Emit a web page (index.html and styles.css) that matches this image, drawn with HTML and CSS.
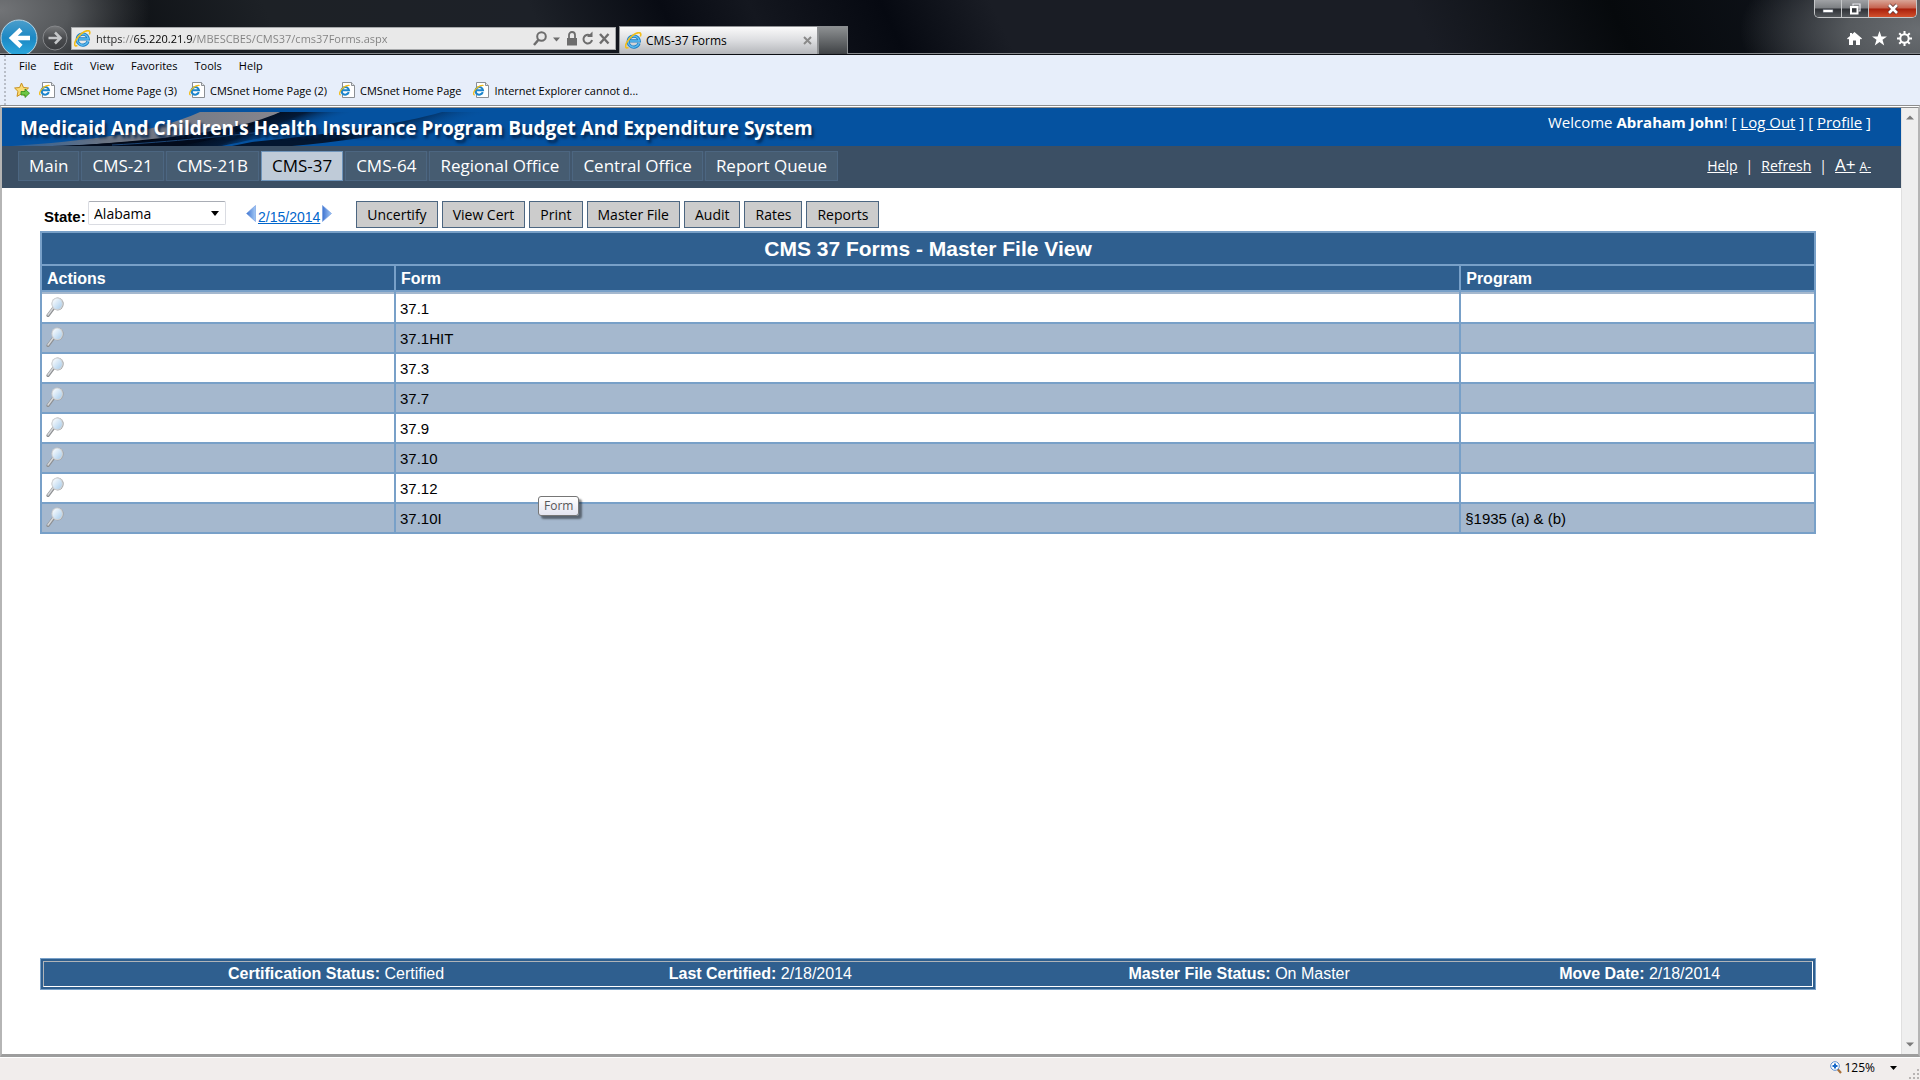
FILE: index.html
```html
<!DOCTYPE html>
<html lang="en">
<head>
    <meta charset="UTF-8">
    <meta name="viewport" content="width=device-width, initial-scale=1.0">
    <title>CMS-37 Forms</title>
    <link rel="stylesheet" href="styles.css">
</head>
<body>
    <svg width="0" height="0" class="defs" aria-hidden="true">
        <defs>
            <linearGradient id="glass" x1="0" y1="0" x2="1" y2="1">
                <stop offset="0" stop-color="#ffffff"/>
                <stop offset="1" stop-color="#a9cdec"/>
            </linearGradient>
            <linearGradient id="back" x1="0" y1="0" x2="0" y2="1">
                <stop offset="0" stop-color="#4b9ecb"/>
                <stop offset="0.5" stop-color="#1c88c4"/>
                <stop offset="1" stop-color="#2ba9de"/>
            </linearGradient>
            <linearGradient id="fwd" x1="0" y1="0" x2="0" y2="1">
                <stop offset="0" stop-color="#77797b"/>
                <stop offset="0.5" stop-color="#4a4c4f"/>
                <stop offset="1" stop-color="#3a3c3f"/>
            </linearGradient>
            <linearGradient id="tri" x1="0" y1="0" x2="1" y2="0">
                <stop offset="0" stop-color="#3f74d0"/>
                <stop offset="1" stop-color="#a3c8f5"/>
            </linearGradient>
            <linearGradient id="shade" gradientUnits="userSpaceOnUse" x1="240" y1="10" x2="252" y2="42">
                <stop offset="0" stop-color="#020814"/>
                <stop offset="0.5" stop-color="#031a38"/>
                <stop offset="1" stop-color="#0552a0" stop-opacity="0"/>
            </linearGradient>
            <linearGradient id="shade2" gradientUnits="userSpaceOnUse" x1="400" y1="8" x2="410" y2="34">
                <stop offset="0" stop-color="#031630"/>
                <stop offset="1" stop-color="#0552a0" stop-opacity="0"/>
            </linearGradient>
            <linearGradient id="silver" x1="0" y1="0" x2="1" y2="0">
                <stop offset="0" stop-color="#2b5f98"/>
                <stop offset="0.35" stop-color="#6a7382"/>
                <stop offset="1" stop-color="#85858d"/>
            </linearGradient>
            <symbol id="ie" viewBox="0 0 16 16">
                <path d="M13.2 10.6A5.2 5.2 0 1 1 13.4 8.4H4.5" fill="none" stroke="#1f7fc4" stroke-width="3"/>
                <path d="M13.2 10.6A5.2 5.2 0 1 1 13.4 8.4H4.5" fill="none" stroke="#5cbcf0" stroke-width="1.4"/>
                <path d="M3.2 14.6C.6 15.9-.3 13.6 1.7 9.8 4.2 5 9.7.6 13 .6c2.200 0 2.200 1.800 1.400 3.600" fill="none" stroke="#f3bd19" stroke-width="1.500"/>
            </symbol>
            <symbol id="page" viewBox="0 0 16 16">
                <path d="M3.500.5h9l3 3v12h-12z" fill="#fff" stroke="#8b8f94"/>
                <path d="M12.500.5v3h3" fill="#e4e6e8" stroke="#8b8f94"/>
                <path d="M9.800 10.200A3.800 3.800 0 1 1 10 8.200H3.500" fill="none" stroke="#1b84cc" stroke-width="2"/>
                <path d="M1.800 12.800C-.2 13 .3 9.600 3 6.800c2.500-2.700 6-4.100 7.600-3.200" fill="none" stroke="#f3bd19" stroke-width="1.200"/>
            </symbol>
            <symbol id="loupe" viewBox="0 0 18 20">
                <path d="M2 18.500L8 10.500" stroke="#8d8f92" stroke-width="3.200" stroke-linecap="round"/>
                <path d="M2 18L7.500 10.500" stroke="#d5d7d9" stroke-width="1.500" stroke-linecap="round"/>
                <ellipse cx="11.700" cy="7" rx="6" ry="6.500" fill="#9ea1a4"/>
                <ellipse cx="11.200" cy="6.700" rx="5.800" ry="6.300" fill="#d0d3d6"/>
                <ellipse cx="11.200" cy="6.700" rx="4.700" ry="5.200" fill="url(#glass)"/>
            </symbol>
        </defs>
    </svg>

    <div class="titlebar">
        <div class="nav-buttons">
            <button class="round back" aria-label="Back">
                <svg width="38" height="38" viewBox="0 0 38 38"><circle cx="19" cy="19" r="18" fill="url(#back)" stroke="#b7d3e2"/><path d="M30 19H12M21 10.500L12 19l9 8.500" fill="none" stroke="#fff" stroke-width="4.500"/></svg>
            </button>
            <button class="round" aria-label="Forward">
                <svg width="26" height="26" viewBox="0 0 26 26"><circle cx="13" cy="13" r="12" fill="url(#fwd)" stroke="#85878a"/><path d="M6.500 13H18M13 7.500l5.500 5.500-5.500 5.500" fill="none" stroke="#c5c7c9" stroke-width="2.500"/></svg>
            </button>
        </div>
        <div class="address">
            <svg width="17" height="17"><use href="#ie"/></svg>
            <input type="text" class="url" aria-label="Address" value="https://65.220.21.9/MBESCBES/CMS37/cms37Forms.aspx">
            <svg width="81" height="18" viewBox="0 0 81 18" fill="none" stroke="#6d6d6d">
                <circle cx="9.500" cy="6.500" r="4.300" stroke-width="2"/><path d="M6.500 9.800L2 15" stroke-width="2.500"/>
                <path d="M21 7.500h7l-3.500 4z" fill="#6d6d6d" stroke="none"/>
                <path d="M35 8h10v7.500H35z" fill="#6d6d6d" stroke="none"/><path d="M37 8V5a3 3 0 0 1 6 0v3" stroke-width="1.800"/>
                <path d="M58 5.500A4.300 4.300 0 1 0 60 10" stroke-width="2"/><path d="M55 7h5.500V1.500z" fill="#6d6d6d" stroke="none"/>
                <path d="M68 4l8.500 9.500M76.500 4L68 13.500" stroke-width="2.400"/>
            </svg>
        </div>
        <div class="tab">
            <svg width="17" height="17"><use href="#ie"/></svg>
            <span>CMS-37 Forms</span>
            <button class="tab-close" aria-label="Close tab"><svg width="9" height="9" viewBox="0 0 9 9"><path d="M1 1l7 7M8 1L1 8" stroke="#8a8a8a" stroke-width="2"/></svg></button>
        </div>
        <button class="new-tab" aria-label="New tab"></button>
        <div class="window-side">
            <div class="window-buttons">
                <button aria-label="Minimize"><svg width="12" height="12" viewBox="0 0 12 12"><path d="M1 6.500h10v3H1z" fill="#fff" stroke="#555a66" stroke-width=".6"/></svg></button>
                <button aria-label="Restore"><svg width="12" height="12" viewBox="0 0 12 12"><path d="M4 2.500V1h7v7H9.500" fill="none" stroke="#e8e8ee" stroke-width="1.200"/><path d="M2 4h6.500v6.500H2z" fill="none" stroke="#fff" stroke-width="2"/></svg></button>
                <button class="close" aria-label="Close"><svg width="12" height="12" viewBox="0 0 12 12"><path d="M2 2l8 8M10 2L2 10" stroke="#5b3434" stroke-width="4"/><path d="M2 2l8 8M10 2L2 10" stroke="#fff" stroke-width="2.600"/></svg></button>
            </div>
            <div class="tools">
                <button aria-label="Home"><svg width="15" height="15" viewBox="0 0 15 15"><path d="M7.500 1L15 7.500l-1 1-1-.8V14H9V9.500H6V14H2V7.700l-1 .8-1-1L3 5V2h2v1.200z" fill="#fff"/></svg></button>
                <button aria-label="Favorites"><svg width="15" height="15" viewBox="0 0 15 15"><path d="M7.500 0l1.900 5.400H15l-4.500 3.400 1.700 5.700-4.700-3.500-4.700 3.500 1.700-5.700L0 5.400h5.600z" fill="#fff"/></svg></button>
                <button aria-label="Settings"><svg width="15" height="15" viewBox="0 0 15 15" fill="none" stroke="#fff"><circle cx="7.500" cy="7.500" r="4.200" stroke-width="2"/><path d="M7.500 0v3M7.500 12v3M0 7.500h3M12 7.500h3M2.200 2.200l2.100 2.100M10.700 10.700l2.100 2.100M2.200 12.800l2.100-2.100M10.700 4.300l2.100-2.100" stroke-width="2"/></svg></button>
            </div>
        </div>
    </div>

    <div class="bars">
        <div class="menu">
            <a href="#">File</a>
            <a href="#">Edit</a>
            <a href="#">View</a>
            <a href="#">Favorites</a>
            <a href="#">Tools</a>
            <a href="#">Help</a>
        </div>
        <div class="bookmarks">
            <svg width="16" height="16" viewBox="0 0 16 16"><path d="M7.500 1l2 4.500 5 .5-3.700 3.400 1 5-4.300-2.600-4.500 2.600 1-5L.6 6l5-.5z" fill="#fbdc74" stroke="#c8901d"/><path d="M7 9.500h4V7l4.500 4.200L11 15.500V13H7z" fill="#6cc644" stroke="#2f8a1c" stroke-width=".8"/></svg>
            <div class="bookmark-list">
                <a href="#"><svg width="16" height="16"><use href="#page"/></svg>CMSnet Home Page (3)</a>
                <a href="#"><svg width="16" height="16"><use href="#page"/></svg>CMSnet Home Page (2)</a>
                <a href="#"><svg width="16" height="16"><use href="#page"/></svg>CMSnet Home Page</a>
                <a href="#"><svg width="16" height="16"><use href="#page"/></svg>Internet Explorer cannot d...</a>
            </div>
        </div>
    </div>

    <div class="viewport">
        <div class="page">
            <div class="banner">
                <svg class="swoosh" width="500" height="38" viewBox="0 0 500 38">
                    <path d="M250 34C330 26 400 16 440 4h55C450 14 380 30 290 38h-60z" fill="url(#shade2)"/>
                    <path d="M60 38C150 32 230 20 278 4h85C320 18 260 30 220 38z" fill="url(#shade)"/>
                    <path d="M10 38C80 33 150 26 198 4h80C245 20 170 32 60 38z" fill="url(#silver)"/>
                    <path d="M50 38C140 35 220 26 256 14 230 28 200 35 170 38z" fill="#020b1c"/>
                    <path d="M110 37C170 34 220 28 300 20" fill="none" stroke="#1d4676" stroke-width="1"/>
                </svg>
                <h1>Medicaid And Children's Health Insurance Program Budget And Expenditure System</h1>
                <div class="welcome">Welcome <b>Abraham John</b>! [ <a href="#">Log Out</a> ] [ <a href="#">Profile</a> ]</div>
            </div>
            <div class="navbar">
                <div class="tabs">
                    <a href="#">Main</a>
                    <a href="#">CMS-21</a>
                    <a href="#">CMS-21B</a>
                    <a href="#" class="active">CMS-37</a>
                    <a href="#">CMS-64</a>
                    <a href="#">Regional Office</a>
                    <a href="#">Central Office</a>
                    <a href="#">Report Queue</a>
                </div>
                <div class="links">
                    <a href="#">Help</a><span>|</span><a href="#">Refresh</a><span>|</span><a href="#" class="bigger">A+</a><a href="#" class="smaller">A-</a>
                </div>
            </div>

            <div class="content">
                <div class="toolbar">
                    <label for="state">State:</label>
                    <div class="select-wrap">
                        <select id="state" name="state">
                            <option>Alabama</option>
                        </select>
                        <svg width="8" height="5" viewBox="0 0 8 5"><path d="M0 0h8L4 5z"/></svg>
                    </div>
                    <div class="date">
                        <button aria-label="Previous date"><svg width="10" height="17" viewBox="0 0 10 17"><path d="M9.500.5v16L.5 8.500z" fill="url(#tri)" stroke="#6f9be0" stroke-width=".6"/></svg></button>
                        <a href="#">2/15/2014</a>
                        <button aria-label="Next date"><svg width="10" height="17" viewBox="0 0 10 17"><path d="M.5.5v16l9-8z" fill="url(#tri)" stroke="#6f9be0" stroke-width=".6"/></svg></button>
                    </div>
                    <div class="button-container">
                        <button>Uncertify</button>
                        <button>View Cert</button>
                        <button>Print</button>
                        <button>Master File</button>
                        <button>Audit</button>
                        <button>Rates</button>
                        <button>Reports</button>
                    </div>
                </div>

                <div class="table-wrap">
                    <table class="forms">
                        <colgroup>
                            <col class="col-actions">
                            <col class="col-form">
                            <col class="col-program">
                        </colgroup>
                        <thead>
                            <tr class="caption"><th colspan="3">CMS 37 Forms - Master File View</th></tr>
                            <tr class="head"><th>Actions</th><th>Form</th><th>Program</th></tr>
                        </thead>
                        <tbody>
                            <tr><td><a href="#" aria-label="View 37.1"><svg width="18" height="20"><use href="#loupe"/></svg></a></td><td>37.1</td><td></td></tr>
                            <tr><td><a href="#" aria-label="View 37.1HIT"><svg width="18" height="20"><use href="#loupe"/></svg></a></td><td>37.1HIT</td><td></td></tr>
                            <tr><td><a href="#" aria-label="View 37.3"><svg width="18" height="20"><use href="#loupe"/></svg></a></td><td>37.3</td><td></td></tr>
                            <tr><td><a href="#" aria-label="View 37.7"><svg width="18" height="20"><use href="#loupe"/></svg></a></td><td>37.7</td><td></td></tr>
                            <tr><td><a href="#" aria-label="View 37.9"><svg width="18" height="20"><use href="#loupe"/></svg></a></td><td>37.9</td><td></td></tr>
                            <tr><td><a href="#" aria-label="View 37.10"><svg width="18" height="20"><use href="#loupe"/></svg></a></td><td>37.10</td><td></td></tr>
                            <tr><td><a href="#" aria-label="View 37.12"><svg width="18" height="20"><use href="#loupe"/></svg></a></td><td>37.12</td><td></td></tr>
                            <tr><td><a href="#" aria-label="View 37.10I"><svg width="18" height="20"><use href="#loupe"/></svg></a></td><td>37.10I</td><td>§1935 (a) &amp; (b)</td></tr>
                        </tbody>
                    </table>
                    <div class="tooltip">Form</div>
                </div>

                <div class="status">
                    <div class="status-inner">
                        <div><b>Certification Status:</b> Certified</div>
                        <div><b>Last Certified:</b> 2/18/2014</div>
                        <div><b>Master File Status:</b> On Master</div>
                        <div><b>Move Date:</b> 2/18/2014</div>
                    </div>
                </div>
            </div>
        </div>
        <div class="scrollbar">
            <svg width="8" height="5" viewBox="0 0 8 5"><path d="M0 4.500h8L4 .5z" fill="#7b7b7b"/></svg>
            <svg width="8" height="5" viewBox="0 0 8 5"><path d="M0 .5h8l-4 4z" fill="#7b7b7b"/></svg>
        </div>
    </div>

    <div class="statusbar">
        <button class="zoom">
            <svg width="12" height="13" viewBox="0 0 12 13"><path d="M7.500 8L11 12" stroke="#a8703a" stroke-width="2.200"/><circle cx="5" cy="5" r="4.300" fill="#fff" stroke="#5a8fd0"/><path d="M5 2.500v5M2.500 5h5" stroke="#1668c8" stroke-width="2"/></svg>
            <span>125%</span>
            <svg class="arrow" width="7" height="4" viewBox="0 0 7 4"><path d="M0 0h7L3.500 4z"/></svg>
        </button>
        <svg width="11" height="11" viewBox="0 0 11 11" fill="#b8b4b3"><path d="M8 0h2v2H8zM8 4h2v2H8zM4 4h2v2H4zM8 8h2v2H8zM4 8h2v2H4zM0 8h2v2H0z"/></svg>
    </div>
</body>
</html>
```

FILE: styles.css
```css
* {
    box-sizing: border-box;
}

body {
    margin: 0;
    height: 100vh;
    display: flex;
    flex-direction: column;
    overflow: hidden;
    font-family: "Open Sans", "Segoe UI", sans-serif;
    font-size: 12px;
    color: #000;
    background-color: #f1edec;
}

button {
    font-family: inherit;
    border: none;
    background: none;
    padding: 0;
}

svg {
    display: block;
    flex: none;
}

.defs {
    position: absolute;
}

/* browser frame */
.titlebar {
    height: 55px;
    flex: none;
    display: flex;
    align-items: flex-end;
    overflow: hidden;
    border-bottom: 1px solid #0b0d12;
    box-shadow: inset 0 -1px 0 #85888c;
    background:
        radial-gradient(ellipse 150px 90px at 0 10px, #727477 0%, #55585b 45%, rgba(20, 23, 27, 0) 100%),
        radial-gradient(ellipse 180px 90px at 100% 30px, #6a6e72 0%, #55595d 40%, rgba(16, 19, 26, 0) 100%),
        linear-gradient(65deg, #0c0f13 100px, #1d2126 260px, #1d2128 500px, #080b13 620px, #14171f 700px, #060911 820px, #1a1d25 920px, #1a1d25 1300px, #06090c 1480px, #11151d 1700px);
}

.nav-buttons {
    width: 71px;
    height: 35px;
    display: flex;
    gap: 4px;
    align-items: flex-start;
}

.round {
    height: 38px;
    display: flex;
    align-items: center;
}

.address {
    flex: 0 1 545px;
    height: 23px;
    margin: 0 3px 4px 0;
    padding: 0 2px;
    display: flex;
    align-items: center;
    gap: 5px;
    background-color: #e9e9e9;
    border: 1px solid #a7a9ab;
}

/* the host name is darker than the rest of the address */
.url {
    flex: 1;
    min-width: 0;
    border: none;
    padding: 0;
    font-family: inherit;
    font-size: 11px;
    color: transparent;
    background: linear-gradient(to right, #222 27px, #808080 27px, #808080 38px, #000 38px, #000 97px, #808080 97px);
    -webkit-background-clip: text;
    background-clip: text;
}

.tab {
    flex: 0 1 199px;
    height: 28px;
    padding: 0 5px;
    display: flex;
    align-items: center;
    gap: 4px;
    border: 1px solid #8f9194;
    border-bottom: none;
    background: linear-gradient(#fafafa, #dcdde0 50%, #b4b6ba);
}

.tab-close {
    margin-left: auto;
}

.new-tab {
    width: 30px;
    height: 28px;
    border: 1px solid #8b8e91;
    border-bottom: none;
    background: linear-gradient(#8d9092, #3f4245);
}

.window-side {
    margin-left: auto;
    height: 54px;
    padding-right: 3px;
    display: flex;
    flex-direction: column;
    align-items: flex-end;
    gap: 13px;
}

.window-buttons {
    height: 18px;
    display: flex;
    border: 1px solid #c5c7c9;
    border-top: none;
    border-radius: 0 0 5px 5px;
    overflow: hidden;
}

.window-buttons button {
    width: 27px;
    display: flex;
    align-items: center;
    justify-content: center;
    background: linear-gradient(#a0a2a5, #7b7e82 48%, #2d3035 52%, #55595d);
    border-right: 1px solid #c5c7c9;
}

.window-buttons .close {
    width: 47px;
    border-right: none;
    background: linear-gradient(#d9a597, #c5614d 48%, #a81f0b 52%, #d2502c);
}

.tools {
    display: flex;
    gap: 10px;
    padding-right: 5px;
}

/* menu and favourites */
.bars {
    height: 50px;
    flex: none;
    margin-left: 4px;
    padding-left: 8px;
    border-left: 2px dotted #b9bec8;
    box-shadow: -4px 0 0 #e7eefa;
    background-color: #e7eefa;
    font-size: 11px;
}

.bars a {
    color: #000;
    text-decoration: none;
}

.menu {
    height: 20px;
    padding-left: 5px;
    display: flex;
    align-items: center;
    gap: 17px;
}

.bookmarks {
    height: 30px;
    display: flex;
    align-items: center;
    gap: 9px;
}

.bookmark-list {
    display: flex;
    gap: 12px;
}

.bookmark-list a {
    display: flex;
    align-items: center;
    gap: 5px;
}

/* web page */
.viewport {
    flex: 1;
    min-height: 0;
    display: flex;
    border: 2px solid #b5b5b5;
    border-top: 3px double #8d8d8d;
    border-bottom: 3px solid #9d9d9d;
    background-color: #fff;
}

.page {
    flex: 1;
    min-width: 0;
    display: flex;
    flex-direction: column;
}

.scrollbar {
    width: 17px;
    padding: 7px 0;
    display: flex;
    flex-direction: column;
    align-items: center;
    justify-content: space-between;
    border-left: 1px solid #e0e0e0;
    background-color: #efefef;
}

.banner {
    position: relative;
    height: 38px;
    padding: 0 30px 0 18px;
    display: flex;
    justify-content: space-between;
    color: #fff;
    background-color: #0552a0;
}

.swoosh {
    position: absolute;
    left: 0;
    top: 0;
}

.banner h1 {
    position: relative;
    margin: 0;
    line-height: 40px;
    font-size: 19px;
    white-space: nowrap;
    text-shadow: 2px 3px 3px #04234a;
}

.welcome {
    font-size: 15px;
    line-height: 28px;
}

.banner a,
.navbar a {
    color: #fff;
}

.navbar {
    height: 42px;
    padding: 5px 30px 0 16px;
    display: flex;
    justify-content: space-between;
    background-color: #3b4f64;
}

.tabs {
    display: flex;
    gap: 2px;
    height: 30px;
    background-color: #42576d;
}

.tabs a {
    padding: 0 10px;
    line-height: 28px;
    font-size: 17px;
    text-decoration: none;
    background-color: #465c71;
    border: 1px solid #4c6681;
}

.tabs .active {
    color: #000;
    background-color: #bfcbd8;
    border-color: #6f95bb;
}

.links {
    display: flex;
    align-items: baseline;
    font-size: 14px;
    line-height: 28px;
    color: #fff;
}

.links span {
    padding: 0 8px;
}

.links .bigger {
    font-size: 17px;
    margin-right: 4px;
}

.links .smaller {
    font-size: 12px;
}

.content {
    flex: 1;
    display: flex;
    flex-direction: column;
    padding: 13px 85px 64px 38px;
    font-family: Arial, "Liberation Sans", sans-serif;
    font-size: 15px;
}

.toolbar {
    height: 30px;
    padding-left: 4px;
    display: flex;
    align-items: flex-start;
}

.toolbar label {
    width: 44px;
    padding-top: 7px;
    font-weight: bold;
}

.select-wrap {
    position: relative;
}

.select-wrap svg {
    position: absolute;
    right: 7px;
    top: 10px;
    pointer-events: none;
}

select {
    width: 138px;
    height: 24px;
    padding: 0 5px;
    appearance: none;
    font-family: "Open Sans", "Segoe UI", sans-serif;
    font-size: 14px;
    color: #000;
    background-color: #fff;
    border: 1px solid #dadce2;
    border-top-color: #a9adb5;
    border-radius: 2px;
}

.date {
    margin: 4px 24px 0 20px;
    display: flex;
    gap: 2px;
}

.date a {
    line-height: 24px;
    font-size: 14px;
    color: #0066cc;
}

.date button {
    height: 17px;
}

.button-container {
    display: flex;
    gap: 4px;
}

.button-container button {
    height: 27px;
    padding: 0 10px;
    font-family: "Open Sans", "Segoe UI", sans-serif;
    font-size: 14px;
    color: #000;
    background-color: #ccc;
    border: 1px solid #4c6681;
}

.table-wrap {
    position: relative;
}

.forms {
    width: 100%;
    table-layout: fixed;
    border-collapse: collapse;
    border: 2px solid #78a0c8;
}

.forms th,
.forms td {
    padding: 0 5px;
    border: 2px solid #78a0c8;
    text-align: left;
}

.forms th {
    color: #fff;
    background-color: #2f5f8f;
    font-size: 16px;
}

.forms .caption th {
    height: 33px;
    font-size: 21px;
    text-align: center;
}

.forms .head th {
    height: 26px;
    padding-top: 2px;
}

.forms td {
    height: 30px;
    padding: 0 4px;
}

.forms tbody tr:first-child td {
    height: 32px;
    padding-top: 2px;
    box-shadow: inset 0 2px 0 #a5b8ce;
}

.forms tbody tr:nth-child(even) {
    background-color: #a5b8ce;
}

.forms td svg {
    margin-bottom: 3px;
}

.col-actions {
    width: 354px;
}

.col-program {
    width: 20%;
}

.tooltip {
    position: absolute;
    left: 498px;
    top: 265px;
    height: 20px;
    padding: 0 5px;
    line-height: 18px;
    font-size: 12px;
    font-family: "Open Sans", "Segoe UI", sans-serif;
    color: #575757;
    background: linear-gradient(#fff, #e4e5f0);
    border: 1px solid #767676;
    border-radius: 3px;
    box-shadow: 3px 3px 2px rgba(0, 0, 0, 0.45);
}

.status {
    margin-top: auto;
    padding: 2px;
    background-color: #2f5f8f;
    border: 1px solid #78a0c8;
}

.status-inner {
    display: grid;
    grid-template-columns: 441fr 460fr 431fr 253fr;
    padding-left: 184px;
    line-height: 24px;
    font-size: 16px;
    color: #fff;
    border: 1px solid #b0b4b8;
    border-right-color: #fff;
    border-bottom-color: #fff;
}

.statusbar {
    height: 23px;
    flex: none;
    display: flex;
    align-items: flex-end;
    justify-content: flex-end;
    border-top: 1px solid #fff;
}

.zoom {
    height: 22px;
    padding-bottom: 3px;
    display: flex;
    align-items: center;
    gap: 2px;
    font-size: 12px;
}

.zoom .arrow {
    margin: 0 12px 0 13px;
}
```
